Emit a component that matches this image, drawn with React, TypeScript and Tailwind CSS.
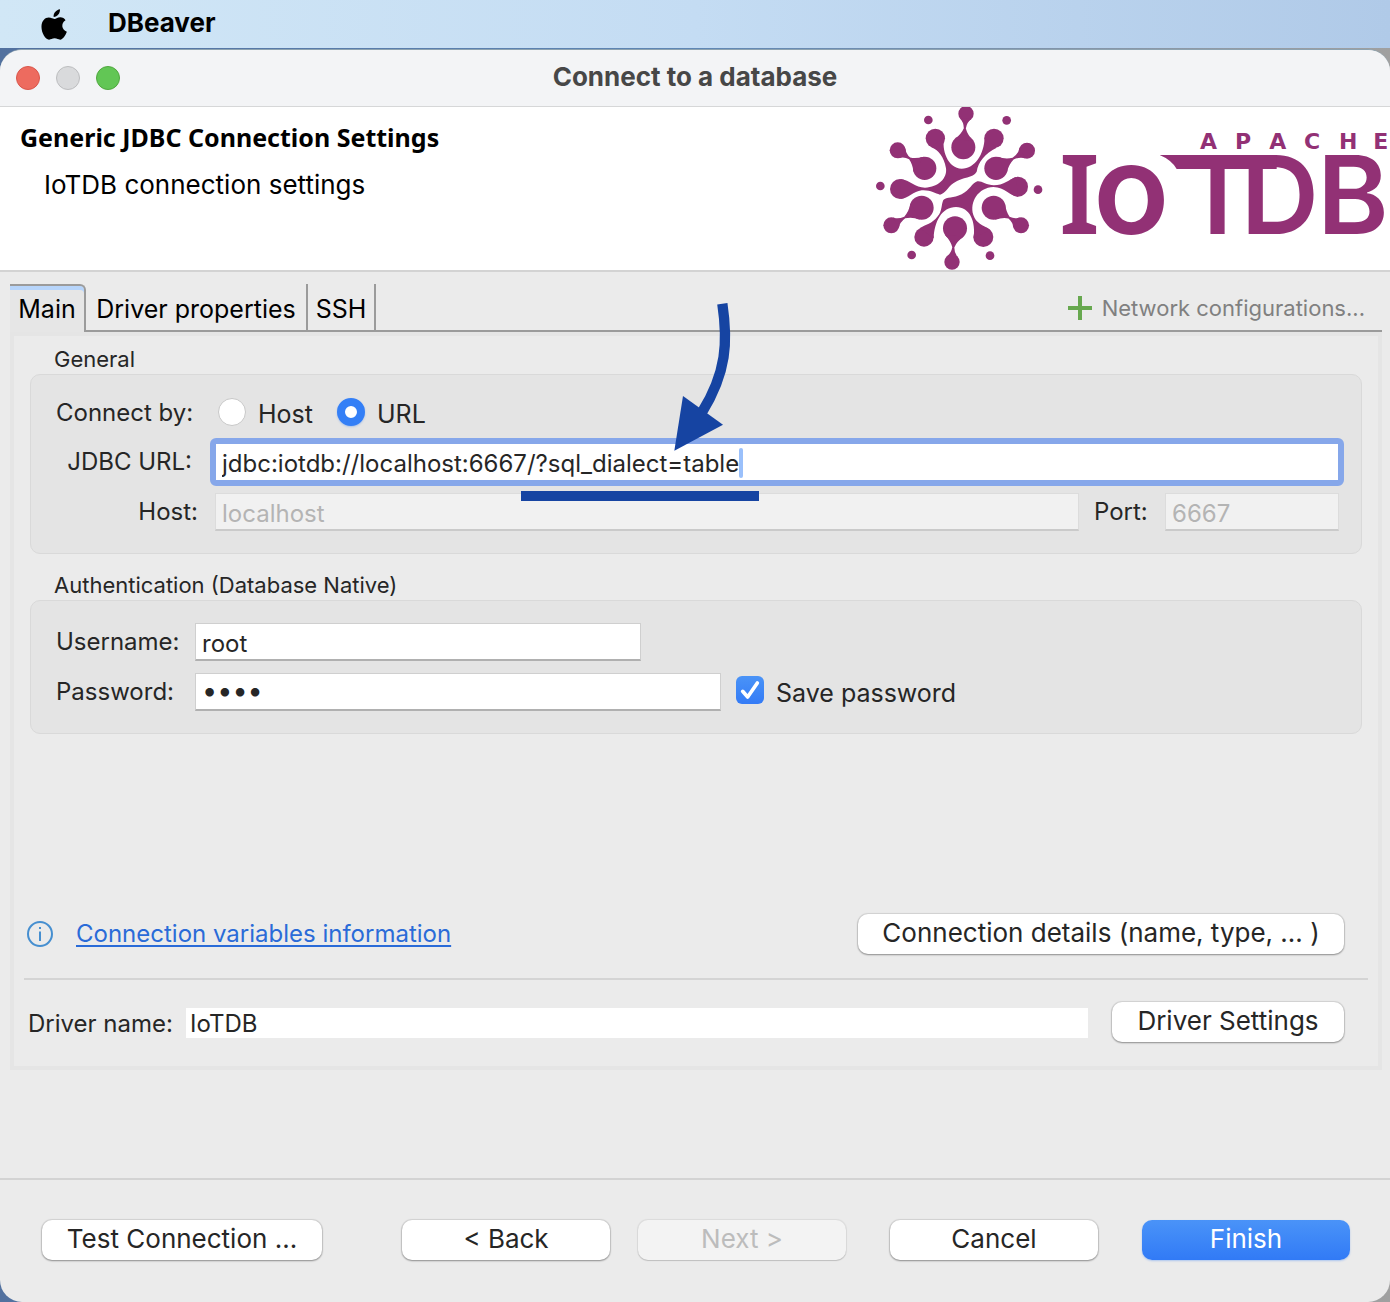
import React from "react";

const PLUM = "#923175";

type Node = [number, number, number];

/** Outline of two round nodes joined by a narrow neck. */
function dropPath([ax, ay, ar]: Node, [bx, by, br]: Node) {
  const len = Math.hypot(bx - ax, by - ay);
  const ux = (bx - ax) / len;
  const uy = (by - ay) / len;
  const at = (along: number, side: number) =>
    `${(ax + ux * along - uy * side).toFixed(1)} ${(ay + uy * along + ux * side).toFixed(1)}`;
  const neck = ar + (len - ar - br) * 0.5;
  const nearA = ar + 3;
  const nearB = len - br - 2;
  const a1 = ar * 0.62;
  const a2 = ar * 0.78;
  const b1 = len - br * 0.65;
  const b2 = br * 0.76;
  return `M${at(a1, a2)} Q${at(nearA, 9)} ${at(neck, 3)} Q${at(nearB, 5)} ${at(b1, b2)} L${at(b1, -b2)} Q${at(nearB, -5)} ${at(neck, -3)} Q${at(nearA, -9)} ${at(a1, -a2)} Z`;
}

const drops: [Node, Node][] = [
  [[280, 142, 36], [288, 41, 23]],
  [[164, 205, 35], [83, 151, 24]],
  [[378, 205, 35], [471, 152, 24]],
  [[155, 323, 36], [64, 376, 24]],
  [[371, 323, 36], [453, 376, 24]],
  [[255, 385, 36], [246, 486, 23]],
];

const nodes: Node[] = [
  [196, 115, 29], [372, 115, 29], [90, 267, 30], [444, 260, 30], [162, 411, 29], [340, 411, 30],
  [175, 60, 13], [410, 61, 13], [31, 258, 13], [504, 269, 13], [125, 465, 13], [360, 467, 13],
];

function IoTDBLogo() {
  return (
    <svg viewBox="0 21 1560 489" className="h-[163px] w-[520px] shrink-0" fill={PLUM} role="img" aria-label="Apache IoTDB">
      {drops.map(([a, b], i) => (
        <g key={i}>
          <circle cx={a[0]} cy={a[1]} r={a[2]} />
          <circle cx={b[0]} cy={b[1]} r={b[2]} />
          <path d={dropPath(a, b)} />
        </g>
      ))}
      {nodes.map(([x, y, r], i) => (
        <circle key={i} cx={x} cy={y} r={r} />
      ))}
      <path d="M224 108 C212 150 235 206 275 206 C315 206 342 165 344 112 L380 143 C345 160 325 185 320 215 C308 236 280 228 250 250 C233 262 225 282 210 284 C195 280 180 269 155 271 C130 274 115 295 92 297 L92 237 C120 240 135 263 165 263 C205 262 232 235 228 205 C222 170 205 150 184 142 Z" />
      <path d="M438 231 C415 240 400 256 372 256 C348 255 335 242 322 244 C305 250 300 270 275 283 C250 295 230 291 220 300 C213 315 217 335 202 350 C188 370 165 374 150 384 L191 415 C193 365 215 321 258 321 C300 321 318 365 311 415 L360 389 C338 375 318 370 310 345 C298 305 325 263 370 261 C405 262 420 288 444 290 Z" />
      <g fontFamily="Inter, sans-serif" fontWeight="600">
        <text y="147" fontSize="66" fontFamily='"DejaVu Sans", sans-serif' x="990 1095 1198 1302 1407 1510">APACHE</text>
        <text y="402" x="567 670" fontSize="332" fontFamily='"Noto Sans", sans-serif'>
          I<tspan fontSize="375" fontFamily="Inter, sans-serif">o</tspan>
        </text>
        <text x="935 1112 1342" y="402" fontSize="325">TDB</text>
      </g>
      <path d="M869 165 H1220 V207 H920 Q905 180 869 165 Z" />
    </svg>
  );
}

function AppleLogo() {
  return (
    <svg viewBox="0 0 78 94" className="h-[31px] w-[26px]" aria-hidden="true">
      <path d="M57 1 C58 13 49 24 38 24 C36 13 46 3 57 1 Z" />
      <path d="M40 30 C46 30 50 25 58 25 C65 25 71 29 74 34 C59 43 62 63 78 69 C74 80 66 92 58 93 C51 93 49 89 41 89 C33 89 30 93 24 93 C13 93 1 73 1 54 C1 36 12 26 23 26 C31 26 35 30 40 30 Z" />
    </svg>
  );
}

function PushButton({ className = "", ...props }: React.ComponentProps<"button">) {
  return (
    <button
      type="button"
      className={`h-10 rounded-[10px] pb-[2px] text-[26px] leading-9 whitespace-pre ${className}`}
      {...props}
    />
  );
}

const raised = "bg-white shadow-[0_0_1px_1px_#0000001a,0_1px_2px_#00000055]";
const field = "h-[38px] border border-[#cfcfcf] border-b-2 border-b-[#b0b0b0] bg-white px-1.5 outline-none";
const disabledField = "h-[38px] border border-[#dcdcdc] border-b-2 border-b-[#cacaca] bg-[#f1f1f1] px-1.5 pt-1 text-[24px] text-[#b4b4b4] outline-none";
const radio = "mb-0.5 size-7 appearance-none rounded-full border border-[#c8c8c8] bg-white checked:border-8 checked:border-[#347ff6] checked:shadow-[0_1px_2px_#347ff655]";

function Annotation() {
  return (
    <svg viewBox="0 0 900 780" className="pointer-events-none absolute top-[-148px] left-[290px] z-10 h-[260px] w-[300px]" aria-hidden="true">
      <path d="M667 41 C684 155 680 247 606 367" fill="none" stroke="#1644a2" strokeWidth="31" />
      <path d="M549 318 L669 404 L523 482 Z" fill="#1644a2" />
      <path d="M63 603 H777 V633 H63 Z" fill="#1644a2" />
    </svg>
  );
}

export default function App() {
  return (
    <div className="flex min-h-screen flex-col bg-[linear-gradient(90deg,#52719f,#5f87b5_50%,#a0a0a0)] font-['Inter',sans-serif] text-[#262626]">
      <header className="flex h-12 items-center bg-[linear-gradient(90deg,#d1e7f6,#c4dcf3_50%,#b0cae8)] pl-[41px] text-black">
        <AppleLogo />
        <span className="ml-[41px] pb-1 text-[26px] font-bold">DBeaver</span>
      </header>

      <div className="mt-px flex flex-1 flex-col overflow-hidden rounded-[22px] border-t border-[#8ea3b0] bg-[#ebebeb]">
        <div className="grid h-[57px] grid-cols-[1fr_auto_1fr] items-center border-b border-[#d6d7d8] bg-[#f3f4f6] px-4">
          <div className="flex gap-4">
            <button type="button" aria-label="Close" className="size-6 rounded-full border border-[#d9564b] bg-[#ed6b5f]" />
            <button type="button" aria-label="Minimize" className="size-6 rounded-full border border-[#bcbdbf] bg-[#d9dadc]" />
            <button type="button" aria-label="Zoom" className="size-6 rounded-full border border-[#50a73f] bg-[#62c655]" />
          </div>
          <h1 className="pb-1 text-[26px] font-bold text-[#474747]">Connect to a database</h1>
        </div>

        <div className="flex justify-between border-b-2 border-[#d3d3d3] bg-white text-black">
          <div className="pt-3 pl-5">
            <h2 className="font-['Noto_Sans',sans-serif] text-[25px] leading-9 font-bold">Generic JDBC Connection Settings</h2>
            <p className="mt-3 pl-6 text-[26px] leading-9">IoTDB connection settings</p>
          </div>
          <IoTDBLogo />
        </div>

        <main className="flex flex-1 flex-col px-2.5 pt-3 pb-[108px] pr-2">
          <div className="flex h-12 text-black" role="tablist">
            <button type="button" role="tab" aria-selected="true" className="w-[76px] rounded-tr-[6px] border-t-2 border-r-2 border-[#9b9b9b] bg-[#e6e6e6] pt-0.5 text-[25px] shadow-[inset_0_4px_0_#b7d5fb]">Main</button>
            <button type="button" role="tab" aria-selected="false" className="w-[222px] border-r-2 border-b-2 border-[#9b9b9b] pt-1.5 text-[25px]">Driver properties</button>
            <button type="button" role="tab" aria-selected="false" className="w-[68px] border-r-2 border-b-2 border-[#9b9b9b] pt-1.5 text-[25px]">SSH</button>
            <div className="flex flex-1 items-center justify-end border-b-2 border-[#9b9b9b] pt-0.5 pr-[17px]">
              <button type="button" className="flex items-center gap-2.5 text-[22px] text-[#808080]">
                <svg viewBox="0 0 24 24" className="size-6" aria-hidden="true">
                  <path d="M12 0 V24 M0 12 H24" stroke="#67a84f" strokeWidth="4" />
                </svg>
                Network configurations...
              </button>
            </div>
          </div>

          <div className="flex flex-1 flex-col border-4 border-[#e5e5e5]">
            <section className="px-4 pt-2">
              <h3 className="pl-6 text-[22px] leading-[30px]">General</h3>
              <div className="rounded-[10px] border border-[#d9d9d9] bg-[#e4e4e4] pt-5 pr-[17px] pb-[22px] pl-[25px]">
                <div className="flex h-9 items-center text-[24px]">
                  <span className="w-[162px]">Connect by:</span>
                  <label className="flex items-center gap-3 text-[25px]">
                    <input type="radio" name="mode" className={radio} />
                    <span className="pt-1">Host</span>
                  </label>
                  <label className="ml-6 flex items-center gap-3 text-[25px]">
                    <input type="radio" name="mode" defaultChecked className={radio} />
                    <span className="pt-1">URL</span>
                  </label>
                </div>
                <div className="mt-[7px] flex items-center">
                  <label htmlFor="url" className="w-[154px] pr-[18px] text-right text-[24px]">JDBC URL:</label>
                  <div className="relative flex-1">
                    <input id="url" defaultValue="jdbc:iotdb://localhost:6667/?sql_dialect=table" className="block h-12 w-full rounded-[6px] border-[6px] border-[#86a7ea] bg-white px-1.5 pt-0.5 text-[24px] outline-none" />
                    <span className="absolute top-[10px] left-[529px] h-[30px] w-1 rounded-sm bg-[#9ac0fb]" />
                    <Annotation />
                  </div>
                </div>
                <div className="mt-[7px] mr-[5px] flex items-center text-[24px]">
                  <label htmlFor="host" className="w-[159px] pr-[17px] text-right">Host:</label>
                  <input id="host" disabled defaultValue="localhost" className={`${disabledField} min-w-0 flex-1`} />
                  <label htmlFor="port" className="w-[86px] pl-[15px]">Port:</label>
                  <input id="port" disabled defaultValue="6667" className={`${disabledField} w-[174px]`} />
                </div>
              </div>
            </section>

            <section className="px-4 pt-4">
              <h3 className="pl-6 text-[22px] leading-[30px]">Authentication (Database Native)</h3>
              <div className="rounded-[10px] border border-[#d9d9d9] bg-[#e4e4e4] py-[22px] pl-[25px]">
                <div className="flex items-center">
                  <label htmlFor="user" className="w-[139px] text-[24px]">Username:</label>
                  <input id="user" defaultValue="root" className={`${field} w-[446px] pt-1 text-[24px]`} />
                </div>
                <div className="mt-3 flex h-[38px] items-center">
                  <label htmlFor="password" className="w-[139px] text-[24px]">Password:</label>
                  <input id="password" type="password" defaultValue="root" className={`${field} w-[526px] text-[27px]`} />
                  <label className="ml-[15px] flex items-center gap-3 text-[25px]">
                    <span className="relative mb-1 size-7">
                      <input type="checkbox" defaultChecked className="block size-7 appearance-none rounded-[6px] bg-white checked:bg-linear-to-b checked:from-[#4a93f7] checked:to-[#347bf6]" />
                      <svg viewBox="0 0 84 84" className="pointer-events-none absolute inset-0 size-7" aria-hidden="true">
                        <path d="M20 46 L35 63 L64 21" fill="none" stroke="#fff" strokeWidth="11" strokeLinecap="round" strokeLinejoin="round" />
                      </svg>
                    </span>
                    <span className="pt-1">Save password</span>
                  </label>
                </div>
              </div>
            </section>

            <div className="mt-auto flex items-center justify-between pr-[34px] pl-3">
              <div className="flex items-center gap-[22px]">
                <svg viewBox="0 0 28 28" className="size-7" fill="none" stroke="#468fd0" aria-hidden="true">
                  <circle cx="14" cy="14" r="12" strokeWidth="2" />
                  <path d="M14 11.5 V21 M14 7 V9" strokeWidth="2" />
                </svg>
                <a href="#variables" className="text-[24px] text-[#2a6bd8] underline decoration-2 underline-offset-[3px]">Connection variables information</a>
              </div>
              <PushButton className={`${raised} w-[486px]`}>Connection details (name, type, ... )</PushButton>
            </div>

            <hr className="mx-2.5 mt-6 border-t-2 border-[#d4d4d4]" />

            <div className="flex items-center pt-[22px] pr-[34px] pb-6 pl-[14px]">
              <label htmlFor="driver" className="w-[158px] pt-1 text-[24px]">Driver name:</label>
              <input id="driver" readOnly defaultValue="IoTDB" className="mt-0.5 h-[30px] min-w-0 flex-1 bg-white px-1 pt-0.5 text-[24px] outline-none" />
              <PushButton className={`${raised} ml-6 w-[232px]`}>Driver Settings</PushButton>
            </div>
          </div>
        </main>

        <footer className="flex border-t-2 border-[#d3d3d3] px-10 pt-10 pb-[42px] pl-[42px]">
          <PushButton className={`${raised} w-[280px]`}>Test Connection ...</PushButton>
          <PushButton className={`${raised} ml-auto w-52`}>&lt; Back</PushButton>
          <PushButton disabled className="ml-7 w-52 bg-[#f3f3f3] text-[#bcbcbc] shadow-[0_0_1px_1px_#00000012,0_1px_1px_#00000022]">Next &gt;</PushButton>
          <PushButton className={`${raised} ml-11 w-52`}>Cancel</PushButton>
          <PushButton className="ml-11 w-52 bg-linear-to-b from-[#4a93f8] to-[#317af6] text-white shadow-[0_1px_2px_#317af655]">Finish</PushButton>
        </footer>
      </div>
    </div>
  );
}
